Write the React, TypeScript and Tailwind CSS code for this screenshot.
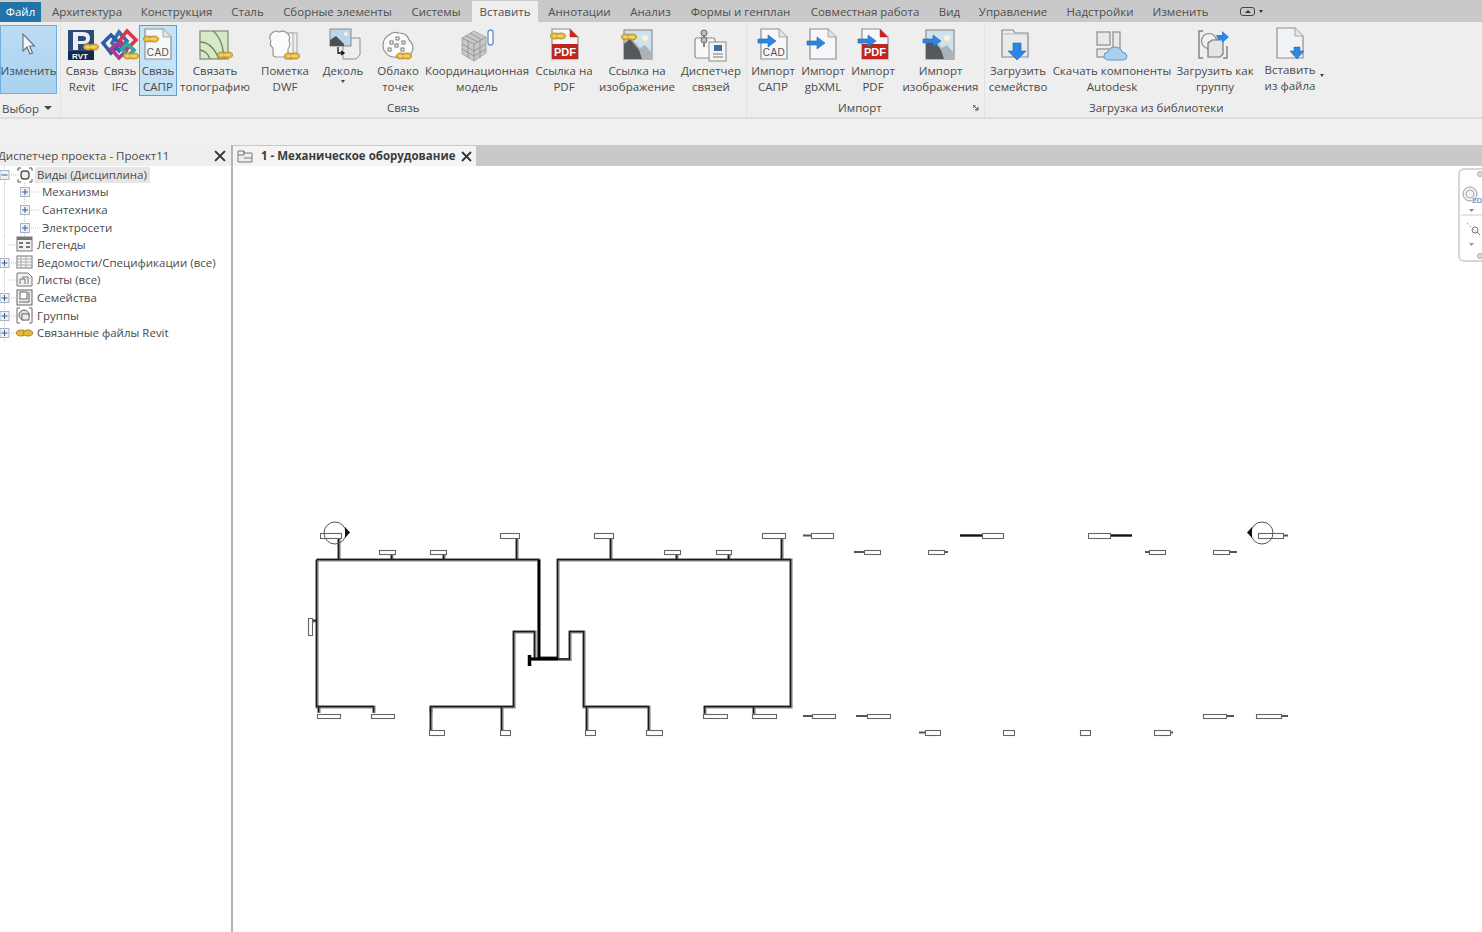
import type { ReactNode } from "react"

// tab width keeps each caption centred where the ribbon has it
const tabs = [
  { t: "Архитектура", w: "w-[92px]" },
  { t: "Конструкция", w: "w-[87px]" },
  { t: "Сталь", w: "w-[55px]" },
  { t: "Сборные элементы", w: "w-[125px]" },
  { t: "Системы", w: "w-[72px]" },
]
const tabs2 = [
  { t: "Аннотации", w: "w-[83px]" },
  { t: "Анализ", w: "w-[59px]" },
  { t: "Формы и генплан", w: "w-[121px]" },
  { t: "Совместная работа", w: "w-[128px]" },
  { t: "Вид", w: "w-[41px]" },
  { t: "Управление", w: "w-[86px]" },
  { t: "Надстройки", w: "w-[88px]" },
  { t: "Изменить", w: "w-[73px]" },
]

// small shared bits for the ribbon icons
const Chain = ({ x, y }: { x: number; y: number }) => (
  <g transform={`translate(${x} ${y})`}>
    <ellipse cx="-3" cy="0" rx="4.5" ry="3" fill="#e8b93a" stroke="#a8841f" strokeWidth="0.8" />
    <ellipse cx="3" cy="0" rx="4.5" ry="3" fill="#e8b93a" stroke="#a8841f" strokeWidth="0.8" />
    <path d="M-5 0h10" stroke="#f7e7a8" strokeWidth="1" />
  </g>
)

const Arrow = ({ x, y }: { x: number; y: number }) => (
  <path
    transform={`translate(${x} ${y})`}
    d="M0 4h10V0l8 6-8 6V8H0z"
    fill="#2f86e0"
    stroke="#1c63b4"
    strokeWidth="0.6"
  />
)

const Doc = ({ x = 0, w = 26, fill = "#f6f7f8" }: { x?: number; w?: number; fill?: string }) => (
  <g transform={`translate(${x} 1)`}>
    <path d={`M0 0H${w - 8}L${w} 8V30H0z`} fill={fill} stroke="#8b8f93" strokeWidth="1.2" />
    <path d={`M${w - 8} 0V8H${w}`} fill="#e3e5e7" stroke="#a4a7aa" strokeWidth="1" />
  </g>
)

const Landscape = ({ x, y = 2 }: { x: number; y?: number }) => (
  <g transform={`translate(${x} ${y})`}>
    <rect width="28" height="29" fill="#cfe3ee" stroke="#8d9194" strokeWidth="1.2" />
    <circle cx="21" cy="8" r="3" fill="#fbf6cf" />
    <path d="M0 29V13L7 8l9 10 5-3 7 8v6z" fill="#a9b3b9" />
    <path d="M0 29V14l6-5 9 11 3 9z" fill="#55595c" />
  </g>
)

const PdfDoc = ({ x }: { x: number }) => (
  <g>
    <Doc x={x} />
    <path d={`M${x + 18} 1l8 8h-8z`} fill="#c8231c" />
    <rect x={x} y="16" width="26" height="15" fill="#c0261d" />
    <text x={x + 13} y="28" textAnchor="middle" fontSize="11" fontWeight="700" fill="#fff" fontFamily="Liberation Sans, sans-serif">PDF</text>
  </g>
)

const CadLabel = ({ x }: { x: number }) => (
  <text x={x} y="28" textAnchor="middle" fontSize="10" fill="#555" fontFamily="Liberation Sans, sans-serif" letterSpacing="0.5">CAD</text>
)

const Icon = ({ children }: { children: ReactNode }) => (
  <svg width="44" height="34" viewBox="0 0 44 34" className="shrink-0 overflow-visible">
    {children}
  </svg>
)

const icons: Record<string, ReactNode> = {
  cursor: <path d="M16 6v17l4-4 3 7 2.500-1-3-7h5z" fill="#f4f8fb" stroke="#6a6a6a" strokeWidth="1.1" />,
  revit: (
    <g>
      <rect x="8" y="2" width="26" height="30" fill="#2d4a78" />
      <path d="M13 4h10q7 0 7 6t-7 6h-5v6h-5z" fill="#e9eef5" />
      <path d="M18 8h5q3 0 3 2.500t-3 2.500h-5z" fill="#2d4a78" />
      <rect x="8" y="23" width="26" height="9" fill="#16294b" />
      <text x="20" y="31" textAnchor="middle" fontSize="8" fontWeight="700" fill="#fff" fontFamily="Liberation Sans, sans-serif">RVT</text>
      <Chain x={31} y={19} />
    </g>
  ),
  ifc: (
    <g fill="none" strokeWidth="3.600">
      <path d="M14 15l7-11 8 9-8 10z" stroke="#2e6fb5" />
      <path d="M22 12l7-9 9 9-9 9z" stroke="#d8394c" />
      <path d="M5 15l8-8 9 9-9 9z" stroke="#2b5da6" />
      <path d="M13 21l8 9 7-7-8-8z" stroke="#b2398f" />
      <path d="M24 21l6 7 6-6-7-6z" stroke="#2ea7a3" />
      <g strokeWidth="0.800"><Chain x={33} y={28} /></g>
    </g>
  ),
  cad: (
    <g>
      <Doc x={9} />
      <CadLabel x={22} />
      <Chain x={15} y={11} />
    </g>
  ),
  topo: (
    <g>
      <rect x="7" y="3" width="28" height="28" fill="#d9e8c9" stroke="#7d8a70" strokeWidth="1.2" />
      <path d="M7 14q12 0 19 17M7 22q7 1 10 9M20 3q10 8 11 28" fill="none" stroke="#6f8c5b" strokeWidth="1.400" />
      <Chain x={32} y={27} />
    </g>
  ),
  dwf: (
    <g>
      <rect x="27" y="5" width="7" height="25" fill="#ededed" stroke="#a5a5a5" />
      <rect x="22" y="5" width="8" height="26" fill="#f5f5f5" stroke="#a5a5a5" />
      <path d="M9 5q3-3 7-1 5-2 8 1 4 3 2 7 2 5-1 9v5q0 3-4 3H13q-3 0-3-3v-6q-4-3-2-7-3-4 1-8z" fill="#fbfbfb" stroke="#999" strokeWidth="1.2" />
      <Chain x={29} y={28} />
    </g>
  ),
  decal: (
    <g>
      <path d="M22 13l4-3h13v17l-4 4H22z" fill="#eeeeee" stroke="#8e8e8e" strokeWidth="1" />
      <rect x="9" y="1" width="21" height="17" fill="#b8d7ea" stroke="#8b8b8b" />
      <path d="M9 18v-6l6-4 8 8v2z" fill="#4d5052" />
      <circle cx="25" cy="6" r="2" fill="#f8f4c8" />
      <path d="M17 19v6h5M20 23l3 2-3 2" fill="none" stroke="#111" strokeWidth="1.300" />
    </g>
  ),
  cloud: (
    <g>
      <path d="M7 18q0-8 6-11 4-4 10-2 8 0 10 7 6 5 3 12-3 5-9 5-4 1-9 0-5 0-8-4-3-3-3-7z" fill="#fafafa" stroke="#8f8f8f" strokeWidth="1.2" />
      <g fill="#fff" stroke="#555" strokeWidth="0.800">
        <rect x="14" y="13" width="3" height="3" />
        <rect x="20" y="9" width="3" height="3" />
        <rect x="26" y="13" width="3" height="3" />
        <rect x="19" y="16" width="3" height="3" />
        <rect x="12" y="20" width="3" height="3" />
        <rect x="25" y="20" width="3" height="3" />
      </g>
      <Chain x={28} y={28} />
    </g>
  ),
  model: (
    <g stroke="#9c9fa1" strokeWidth="0.800">
      <path d="M7 10l12-7 12 6v16l-12 8-12-7z" fill="#c6c8ca" />
      <path d="M19 16l12-7M19 16L7 10M19 16v17M11 8l12 6M15 5l12 7M7 16l12 7 12-7M7 21l12 7 12-7M13 13v17M25 13v17" fill="none" stroke="#8a8c8e" />
      <rect x="33" y="2" width="5" height="15" rx="2.500" fill="#fff" stroke="#5a8fc7" strokeWidth="1.3" />
    </g>
  ),
  pdfLink: (
    <g>
      <PdfDoc x={10} />
      <Chain x={16} y={8} />
    </g>
  ),
  imgLink: (
    <g>
      <Landscape x={9} />
      <Chain x={14} y={9} />
    </g>
  ),
  manager: (
    <g>
      <rect x="6" y="10" width="20" height="20" rx="2" fill="#f8f8f8" stroke="#8d8d8d" strokeWidth="1.2" />
      <rect x="20" y="14" width="17" height="19" fill="#f4f4f4" stroke="#8d8d8d" />
      <rect x="25" y="17" width="8" height="6" fill="#3d6f9f" />
      <path d="M24 26h10M24 29h10" stroke="#777" />
      <path d="M15 19V3" stroke="#6c6c6c" strokeWidth="1.600" />
      <circle cx="15" cy="5" r="3" fill="#bdbdbd" stroke="#666" />
      <circle cx="15" cy="12" r="3" fill="#bdbdbd" stroke="#666" />
    </g>
  ),
  impCad: (
    <g>
      <Doc x={10} />
      <CadLabel x={23} />
      <Arrow x={7} y={7} />
    </g>
  ),
  impXml: (
    <g>
      <Doc x={9} />
      <Arrow x={6} y={9} />
    </g>
  ),
  impPdf: (
    <g>
      <PdfDoc x={11} />
      <Arrow x={7} y={7} />
    </g>
  ),
  impImg: (
    <g>
      <Landscape x={7} />
      <Arrow x={4} y={7} />
    </g>
  ),
  family: (
    <g>
      <path d="M6 2h11l2 3h13v24H6z" fill="#e8eaec" stroke="#85888b" strokeWidth="1.2" />
      <path d="M6 6h26" stroke="#b7b9bb" />
      <path d="M17 15h8v8h5l-9 9-9-9h5z" fill="#2f86e0" stroke="#1c63b4" strokeWidth="0.6" />
    </g>
  ),
  autodesk: (
    <g>
      <rect x="7" y="4" width="13" height="13" fill="#e9e9e9" stroke="#8d8d8d" strokeWidth="1.2" />
      <rect x="23" y="4" width="7" height="25" fill="#e9e9e9" stroke="#8d8d8d" strokeWidth="1.2" />
      <rect x="7" y="21" width="13" height="8" fill="#e9e9e9" stroke="#8d8d8d" strokeWidth="1.2" />
      <path d="M19 32q-5 0-5-4t4-4q1-5 7-5t7 5q4 0 5 4 0 4-4 4z" fill="#a9d0ec" stroke="#5f98c4" />
    </g>
  ),
  group: (
    <g>
      <path d="M10 3H6v27h4M34 18v12h-4" fill="none" stroke="#808080" strokeWidth="1.400" />
      <circle cx="16" cy="13" r="7.500" fill="#f1f1f1" stroke="#8a8a8a" strokeWidth="1.2" />
      <path d="M15 15l4-3h11v14l-3 3H15z" fill="#e4e4e4" stroke="#767676" strokeWidth="1.2" />
      <path d="M23 7h6V3l7 6-7 6v-3h-4z" fill="#2f86e0" />
    </g>
  ),
  insert: (
    <g>
      <Doc x={9} w={26} fill="#f2f3f4" />
      <path d="M26 20h6v4h4l-7 8-7-8h4z" fill="#2f86e0" stroke="#1c63b4" strokeWidth="0.5" />
    </g>
  ),
}

type Btn = { icon: string; l1: string; l2?: string; w: string; arrow?: boolean; active?: boolean }

const RibbonButton = ({ icon, l1, l2, w, arrow, active }: Btn) => (
  <div
    className={`flex h-[71px] shrink-0 flex-col items-center whitespace-nowrap ${w} ${
      active ? "border border-[#5b9fd4] bg-[#c5e3f6]" : "pt-[1px]"
    }`}
  >
    <div className="flex h-[37px] items-center">
      <Icon>{icons[icon]}</Icon>
    </div>
    <span className="h-4 leading-4">{l1}</span>
    {l2 && <span className="h-4 leading-4">{l2}</span>}
    {arrow && <span className="mt-[1px] h-0 w-0 border-x-[2.5px] border-t-[3px] border-x-transparent border-t-[#444]" />}
  </div>
)

const linkButtons: Btn[] = [
  { icon: "revit", l1: "Связь", l2: "Revit", w: "w-[38px]" },
  { icon: "ifc", l1: "Связь", l2: "IFC", w: "w-[38px]" },
  { icon: "cad", l1: "Связь", l2: "САПР", w: "w-[38px]", active: true },
  { icon: "topo", l1: "Связать", l2: "топографию", w: "w-[76px]" },
  { icon: "dwf", l1: "Пометка", l2: "DWF", w: "w-[64px]" },
  { icon: "decal", l1: "Деколь", w: "w-[52px]", arrow: true },
  { icon: "cloud", l1: "Облако", l2: "точек", w: "w-[58px]" },
  { icon: "model", l1: "Координационная", l2: "модель", w: "w-[100px]" },
  { icon: "pdfLink", l1: "Ссылка на", l2: "PDF", w: "w-[74px]" },
  { icon: "imgLink", l1: "Ссылка на", l2: "изображение", w: "w-[72px]" },
  { icon: "manager", l1: "Диспетчер", l2: "связей", w: "w-[76px]" },
]

const importButtons: Btn[] = [
  { icon: "impCad", l1: "Импорт", l2: "САПР", w: "w-[50px]" },
  { icon: "impXml", l1: "Импорт", l2: "gbXML", w: "w-[50px]" },
  { icon: "impPdf", l1: "Импорт", l2: "PDF", w: "w-[50px]" },
  { icon: "impImg", l1: "Импорт", l2: "изображения", w: "w-[85px]" },
]

const libButtons: Btn[] = [
  { icon: "family", l1: "Загрузить", l2: "семейство", w: "w-[64px]" },
  { icon: "autodesk", l1: "Скачать компоненты", l2: "Autodesk", w: "w-[124px]" },
  { icon: "group", l1: "Загрузить как", l2: "группу", w: "w-[82px]" },
]

// project browser tree
const Expander = ({ x, open }: { x: number; open?: boolean }) => (
  <g>
    <rect x={x - 4.5} y="4.500" width="9" height="9" fill="#eef1f7" stroke="#a9b3c6" />
    <path d={`M${x - 3} 9h6${open ? "" : `M${x} 6v6`}`} stroke="#3a5a90" />
  </g>
)

const TreeRow = ({ label, kind, icon, active, child }: { label: string; kind?: "plus" | "minus"; icon?: ReactNode; active?: boolean; child?: boolean }) => (
  <div className="flex h-[17.6px] items-center">
    <svg width={child ? 40 : 35} height="18" className="shrink-0">
      <path d={child ? "M4.500 0v18M24.500 0v18" : "M4.500 0v18"} stroke="#c8c8c8" strokeDasharray="1 1" />
      <path d={child ? "M29 9h11" : "M9 9h9"} stroke="#c8c8c8" strokeDasharray="1 1" />
      {child ? <Expander x={25} /> : kind && <Expander x={4.5} open={kind === "minus"} />}
      {icon}
    </svg>
    <span className={`whitespace-nowrap leading-4 ${child ? "ml-[2px]" : "px-[2px]"} ${active ? "w-[115px] bg-[#e6e6e6]" : ""}`}>{label}</span>
  </div>
)

const treeIcons = {
  views: <g fill="none" stroke="#555"><path d="M18 5V2h3M29 2h3v3M32 13v3h-3M21 16h-3v-3" /><rect x="21" y="5" width="8" height="8" rx="3" fill="#eee" strokeWidth="1.400" /></g>,
  legend: <g><rect x="17" y="1" width="15" height="14" fill="#f2f2f2" stroke="#777" /><rect x="17" y="1" width="15" height="3" fill="#777" /><path d="M19 7h4M26 7h4M19 11h4M26 11h4" stroke="#777" strokeWidth="2" /></g>,
  table: <g><rect x="17" y="2" width="15" height="12" fill="#f7f7f7" stroke="#777" /><path d="M17 5h15M17 8h15M17 11h15M21 2v12M26 2v12" stroke="#aaa" /></g>,
  sheets: <g><path d="M17 2h11l4 4v9H17z" fill="#f0f0f0" stroke="#777" /><path d="M20 13V8h5v5M23 8V6h5v7" fill="none" stroke="#777" /></g>,
  family: <g><rect x="17" y="1" width="15" height="15" fill="#efefef" stroke="#666" /><rect x="20" y="3" width="7" height="7" fill="#fff" stroke="#666" /><path d="M19 13h10V3" fill="none" stroke="#666" /></g>,
  groups: <g fill="none" stroke="#666"><path d="M20 1h-3v15h3M29 1h3v15h-3" /><circle cx="24" cy="8" r="5" fill="#ddd" /><rect x="22" y="7" width="7" height="6" fill="#eee" /></g>,
  links: <g><ellipse cx="21" cy="9" rx="4.500" ry="3" fill="#e8b93a" stroke="#a8841f" /><ellipse cx="28" cy="9" rx="4.500" ry="3" fill="#e8b93a" stroke="#a8841f" /></g>,
}

// duct layout: every run is drawn twice to get the dark core with the grey edge
const runs = [
  "M317 560H539V658H558V560H791V707H704",
  "M317 560V707H374V713M319 707V713",
  "M431 713V707H514V632H535V658",
  "M558 659.500H570V632H584V707H649V731M587 707V731",
  "M431 707V731M502 707V731M705 707V714M754 707V714",
  "M339 538V560M392 554V560M444 554V560M517 538V560",
  "M611 538V560M677 554V560M729 554V560M782 538V560",
  "M312 621H317",
]

const stubs = [
  "M803 535.500H811M854 552H864M944 552H948M960 535.500H982M1110 535.500H1132M1145 552H1149M1229 552H1237M1283 535.500H1288",
  "M803 716H812M856 716H867M919 732.500H925M1170 732.500H1173M1226 716H1234M1281 716H1288",
]

// x, y, width, height of each terminal box
const boxes = [
  [320, 533, 21, 5], [500, 533, 19, 5], [379, 550, 16, 4], [430, 550, 16, 4], [594, 533, 19, 5], [664, 550, 16, 4], [716, 550, 15, 4], [762, 533, 23, 5],
  [811, 533, 22, 5], [864, 550, 16, 4], [928, 550, 16, 4], [982, 533, 21, 5], [1088, 533, 22, 5], [1149, 550, 16, 4], [1213, 550, 16, 4], [1258, 533, 25, 5],
  [317, 714, 23, 4], [371, 714, 23, 4], [429, 730, 15, 5], [500, 730, 10, 5], [585, 730, 10, 5], [646, 730, 16, 5], [703, 714, 24, 4], [752, 714, 24, 4],
  [812, 714, 23, 4], [867, 714, 23, 4], [925, 730, 15, 5], [1003, 730, 11, 5], [1080, 730, 10, 5], [1154, 730, 16, 5], [1203, 714, 23, 4], [1256, 714, 25, 4],
  [308, 618, 4, 17],
]

const Drawing = () => (
  <svg width="1249" height="766" viewBox="233 166 1249 766" className="block">
    <g fill="none">
      {runs.map((d) => (
        <path key={d} d={d} stroke="#8a8a8a" strokeWidth="3.200" />
      ))}
      {runs.map((d) => (
        <path key={d} d={d} stroke="#1a1a1a" strokeWidth="1.400" transform="translate(-0.5 -0.5)" />
      ))}
      {stubs.map((d) => (
        <path key={d} d={d} stroke="#555" strokeWidth="2" />
      ))}
      <path d="M539 560V658" stroke="#000" strokeWidth="2.600" />
      <path d="M530 659H558" stroke="#000" strokeWidth="3.200" />
      <path d="M529.500 655v11" stroke="#000" strokeWidth="3.500" />
      <path d="M960 535.500H982M1110 535.500H1132" stroke="#111" strokeWidth="2" />
    </g>
    {boxes.map(([x, y, w, h]) => (
      <rect key={`${x}-${y}`} x={x + 0.5} y={y + 0.5} width={w} height={h} fill="#fff" stroke="#666" strokeWidth="1.100" />
    ))}
    <circle cx="335" cy="533" r="11" fill="none" stroke="#555" />
    <path d="M345 527l5 5.500-5 5.500z" fill="#111" />
    <circle cx="1262" cy="533" r="11" fill="none" stroke="#555" />
    <path d="M1252 527l-5 5.500 5 5.500z" fill="#111" />
  </svg>
)

const Close = ({ className = "" }: { className?: string }) => (
  <svg width="11" height="11" viewBox="0 0 11 11" className={`shrink-0 ${className}`}>
    <path d="M1 1l9 9M10 1l-9 9" stroke="#333" strokeWidth="1.800" />
  </svg>
)

export default function App() {
  return (
    <div className="flex h-[932px] w-[1482px] flex-col overflow-hidden bg-white font-['Open_Sans',sans-serif] text-[11.5px] text-[#4a4a4a]">
      {/* tabs */}
      <div className="flex h-[22px] shrink-0 items-center bg-[#c9c9c9] pt-[1px] pr-2 text-[#4f4f4f]">
        <div className="flex h-[20px] w-[41px] items-center justify-center bg-[#2274a8] text-white">Файл</div>
        {tabs.map(({ t, w }) => (
          <span key={t} className={`whitespace-nowrap text-center ${w}`}>{t}</span>
        ))}
        <div className="flex h-[21px] w-[66px] items-center justify-center self-end bg-[#eeeeee]">Вставить</div>
        {tabs2.map(({ t, w }) => (
          <span key={t} className={`whitespace-nowrap text-center ${w}`}>{t}</span>
        ))}
        <div className="ml-[23px] flex items-center gap-1">
          <span className="flex h-[9px] w-[15px] items-center justify-center rounded-[3px] border border-[#444]">
            <span className="h-0 w-0 border-x-[3px] border-b-[3px] border-x-transparent border-b-[#333]" />
          </span>
          <span className="h-0 w-0 border-x-[2.5px] border-t-[3px] border-x-transparent border-t-[#333]" />
        </div>
      </div>

      {/* ribbon */}
      <div className="flex h-[97px] shrink-0 border-b-2 border-[#dddddd] bg-[#eeeeee]">
        <div className="flex w-[61px] shrink-0 flex-col border-r border-[#e2e2e2]">
          <div className="mt-[3px] flex h-[70px] w-[57px] flex-col items-center border border-[#72aede] bg-gradient-to-b from-[#bcdcf4] to-[#a9d2f0] pt-[1px]">
            <div className="flex h-[36px] items-center">
              <Icon>{icons.cursor}</Icon>
            </div>
            <span className="h-4 leading-4">Изменить</span>
          </div>
          <div className="mt-[6px] flex items-center gap-[5px] pl-[2px]">
            <span>Выбор</span>
            <span className="h-0 w-0 border-x-[4px] border-t-[4px] border-x-transparent border-t-[#444]" />
          </div>
        </div>

        <div className="flex w-[686px] shrink-0 flex-col border-r border-[#e2e2e2] pl-[2px]">
          <div className="mt-[3px] flex">
            {linkButtons.map((b) => (
              <RibbonButton key={b.icon} {...b} />
            ))}
          </div>
          <span className="mt-[3px] pl-[324px]">Связь</span>
        </div>

        <div className="flex w-[238px] shrink-0 flex-col border-r border-[#e2e2e2] pl-[1px]">
          <div className="mt-[3px] flex">
            {importButtons.map((b) => (
              <RibbonButton key={b.icon} {...b} />
            ))}
          </div>
          <div className="mt-[3px] flex items-center justify-between pr-[5px] pl-[90px]">
            <span>Импорт</span>
            <svg width="6" height="6" viewBox="0 0 6 6">
              <path d="M0 0h3M0 0v3M1 1l4 4M5 2v3H2" fill="none" stroke="#444" />
            </svg>
          </div>
        </div>

        <div className="flex flex-1 flex-col pl-[1px]">
          <div className="mt-[3px] flex">
            {libButtons.map((b) => (
              <RibbonButton key={b.icon} {...b} />
            ))}
            <div className="flex w-[68px] shrink-0 flex-col items-center whitespace-nowrap">
              <div className="flex h-[37px] items-center">
                <Icon>{icons.insert}</Icon>
              </div>
              <span className="h-4 leading-4">Вставить</span>
              <span className="h-4 leading-4">из файла</span>
            </div>
            <span className="mt-[49px] -ml-[4px] h-0 w-0 border-x-[2.5px] border-t-[3px] border-x-transparent border-t-[#444]" />
          </div>
          <span className="mt-[3px] pl-[103px]">Загрузка из библиотеки</span>
        </div>
      </div>

      {/* empty options bar */}
      <div className="h-[26px] shrink-0 bg-[#f0f0f0]" />

      <div className="flex min-h-0 flex-1">
        {/* project browser */}
        <div className="flex w-[233px] shrink-0 flex-col border-r-2 border-[#b5b5b5]">
          <div className="flex h-[21px] shrink-0 items-center justify-between bg-[#eeeeee] pr-[5px]">
            <span className="-ml-[2px] whitespace-nowrap">Диспетчер проекта - Проект11</span>
            <Close className="h-[12px] w-[12px]" />
          </div>
          <div>
            <TreeRow label="Виды (Дисциплина)" kind="minus" icon={treeIcons.views} active />
            <TreeRow label="Механизмы" child />
            <TreeRow label="Сантехника" child />
            <TreeRow label="Электросети" child />
            <TreeRow label="Легенды" icon={treeIcons.legend} />
            <TreeRow label="Ведомости/Спецификации (все)" kind="plus" icon={treeIcons.table} />
            <TreeRow label="Листы (все)" icon={treeIcons.sheets} />
            <TreeRow label="Семейства" kind="plus" icon={treeIcons.family} />
            <TreeRow label="Группы" kind="plus" icon={treeIcons.groups} />
            <TreeRow label="Связанные файлы Revit" kind="plus" icon={treeIcons.links} />
          </div>
        </div>

        {/* view area */}
        <div className="relative flex min-w-0 flex-1 flex-col">
          <div className="flex h-[21px] shrink-0 items-end bg-[#c9c9c9]">
            <div className="flex h-[20px] w-[243px] items-center bg-[#f4f4f4] pl-[4px]">
              <svg width="16" height="14" viewBox="0 0 16 14" className="shrink-0">
                <path d="M1 2h6v2h8v9H1z" fill="#eee" stroke="#777" />
                <path d="M1 6h6V2M7 9h8" fill="none" stroke="#777" />
              </svg>
              <span className="ml-[8px] whitespace-nowrap font-bold text-[#3c3c3c]">1 - Механическое оборудование</span>
              <Close className="ml-auto mr-[4px]" />
            </div>
          </div>
          <Drawing />

          {/* navigation bar over the canvas */}
          <div className="absolute top-[23px] right-[-6px] h-[94px] w-[30px] rounded-md border-2 border-[#d6d6d6] bg-white pt-[1px] pl-[1px]">
            <svg width="24" height="90" viewBox="0 0 24 90">
              <circle cx="19" cy="3" r="2.500" fill="#ddd" stroke="#aaa" />
              <circle cx="9" cy="23" r="7" fill="#f2f2f2" stroke="#999" />
              <circle cx="9" cy="23" r="4" fill="none" stroke="#aaa" />
              <text x="11" y="32" fontSize="8" fontWeight="700" fill="#6a9cc9" fontFamily="Liberation Sans, sans-serif">2D</text>
              <path d="M8 38l2.500 3 2.500-3z" fill="#888" />
              <path d="M0 44h24" stroke="#ccc" />
              <path d="M6 52l9 9" stroke="#999" strokeDasharray="2 2" />
              <circle cx="14" cy="59" r="3" fill="none" stroke="#777" />
              <path d="M16 61l3 3" stroke="#777" />
              <path d="M8 72l2.500 3 2.500-3z" fill="#999" />
              <circle cx="19" cy="85" r="2.500" fill="#ddd" stroke="#aaa" />
            </svg>
          </div>
        </div>
      </div>
    </div>
  )
}
